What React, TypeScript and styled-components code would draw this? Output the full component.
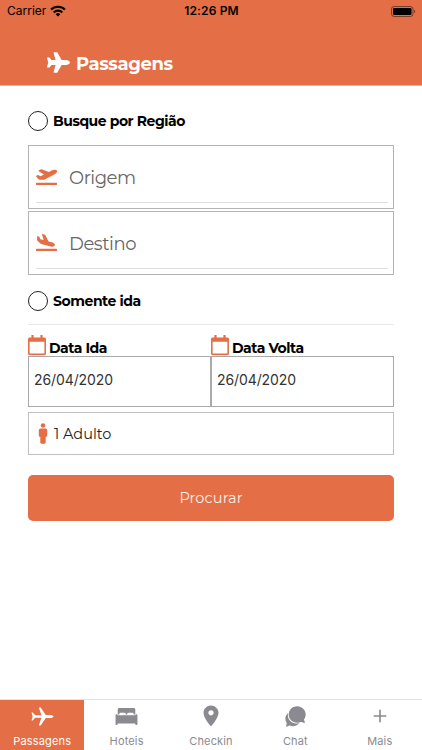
import React from "react";
import styled, { createGlobalStyle } from "styled-components";
import { FaPlane, FaPlaneDeparture, FaPlaneArrival } from "react-icons/fa";
import { IoIosAirplane, IoIosBed, IoMdPin, IoIosChatbubbles, IoIosAdd } from "react-icons/io";

const accent = "#e46e45";
const rule = "#b4b4b6";

const GlobalStyle = createGlobalStyle`
  * { box-sizing: border-box; }
  body { margin: 0; background: #fff; font-family: Montserrat, Inter, "Liberation Sans", sans-serif; color: #000; }
  svg { display: block; flex: none; }
`;

const Screen = styled.div`
  width: 422px;
  height: 750px;
  display: flex;
  flex-direction: column;
  overflow: hidden;
`;

const Header = styled.header`
  height: 86px;
  background: ${accent};
  border-bottom: 1px solid #d9b5a8;
`;

const StatusBar = styled.div`
  height: 22px;
  display: grid;
  grid-template-columns: 1fr auto 1fr;
  align-items: center;
  padding: 0 6px 0 7px;
  font: 400 12px/22px Inter, sans-serif;
`;

const Carrier = styled.span`
  display: flex;
  align-items: center;
  gap: 4px;
`;

const Clock = styled.span`
  font-weight: 600;
  letter-spacing: 0.15px;
`;

const Battery = styled.span`
  display: flex;
  justify-content: flex-end;
`;

const TitleRow = styled.div`
  display: flex;
  align-items: center;
  height: 24px;
  margin: 28px 0 0 47px;
`;

const Title = styled.h1`
  margin: 3px 0 0 6px;
  color: #fff;
  font-size: 18px;
  font-weight: 700;
  line-height: 22px;
  letter-spacing: -0.4px;
`;

const Form = styled.main`
  flex: 1;
  padding: 25px 28px 0;
`;

const RadioRow = styled.label`
  display: flex;
  align-items: center;
  gap: 5px;
  height: 20px;
`;

const Ring = styled.span`
  width: 20px;
  height: 20px;
  border: 1.4px solid #222;
  border-radius: 50%;
`;

const Label = styled.span`
  font-size: 14px;
  font-weight: 700;
  line-height: 18px;
  letter-spacing: -0.45px;
  white-space: nowrap;
`;

const Places = styled.div`
  display: grid;
  gap: 2px;
  margin: 14px 0 16px;
`;

const PlaceBox = styled.div`
  height: 64px;
  border: 1px solid ${rule};
  padding: 0 5px 5px 7px;
`;

const PlaceField = styled.div`
  display: flex;
  align-items: center;
  height: 57px;
  padding-top: 5px;
  border-bottom: 1px solid #dedede;
  color: ${accent};
`;

const PlaceName = styled.span`
  margin: 3px 0 0 12px;
  color: #666;
  font-size: 18px;
  font-weight: 400;
  line-height: 24px;
  letter-spacing: -0.45px;
`;

const Divider = styled.div`
  height: 1px;
  margin: 13px 0 10px;
  background: #e8e8e8;
`;

const Dates = styled.div`
  display: grid;
  grid-template-columns: 1fr 1fr;
`;

const DateHead = styled.div`
  display: flex;
  align-items: flex-end;
  gap: 3px;
  height: 21px;

  ${Label} { margin-bottom: -1px; }
`;

const DateBox = styled.div`
  height: 51px;
  border: 1px solid #a9a9ab;
  padding: 11px 5px;
  color: #333;
  font: 400 14px/24px Inter, sans-serif;
  letter-spacing: -0.1px;
`;

const Travellers = styled.div`
  display: flex;
  align-items: center;
  gap: 6px;
  height: 43px;
  margin-top: 5px;
  padding-left: 9px;
  border: 1px solid #c0c0c2;
  font-size: 14.5px;
  color: #222;
`;

const SearchButton = styled.button`
  display: block;
  width: 100%;
  height: 46px;
  margin-top: 20px;
  padding: 0;
  border: 0;
  border-radius: 5px;
  background: ${accent};
  color: #fdeee8;
  font: 400 14.5px/46px Montserrat, Inter, sans-serif;
  letter-spacing: 0.1px;
`;

const TabBar = styled.nav`
  display: grid;
  grid-template-columns: repeat(5, 1fr);
  height: 51px;
  border-top: 1px solid #e2e2e3;
`;

const Tab = styled.div<{ $active?: boolean }>`
  display: flex;
  flex-direction: column;
  align-items: center;
  background: ${(p) => (p.$active ? accent : "#fff")};
  color: ${(p) => (p.$active ? "#fff" : "#8a8a90")};
`;

const TabIcon = styled.span`
  display: flex;
  align-items: center;
  justify-content: center;
  height: 32px;
`;

const TabLabel = styled.span`
  font: 400 11px/18px Inter, sans-serif;
  letter-spacing: 0.15px;
`;

const WifiIcon = () => (
  <svg width="16" height="12" viewBox="0 0 16 12" fill="none" stroke="#000" strokeWidth="2.1">
    <path d="M1 4.6a10 10 0 0 1 14 0" />
    <path d="M3.7 7.4a6.1 6.1 0 0 1 8.6 0" />
    <path d="M8 11.6 5.6 9.2a3.4 3.4 0 0 1 4.8 0Z" fill="#000" stroke="none" />
  </svg>
);

const BatteryIcon = () => (
  <svg width="25" height="11" viewBox="0 0 25 11">
    <rect x="0.5" y="0.5" width="21.5" height="10" rx="2.6" fill="none" stroke="#000" strokeOpacity="0.45" />
    <rect x="2" y="2" width="18.5" height="7" rx="1.3" />
    <path d="M23.2 3.8c1.4.5 1.4 2.9 0 3.4Z" fillOpacity="0.5" />
  </svg>
);

const CalendarIcon = () => (
  <svg width="18" height="21" viewBox="0 0 18 21" fill={accent}>
    <path
      fillRule="evenodd"
      d="M3.4 0h2.2v2.4h6.8V0h2.2v2.4H16.4Q18 2.4 18 4V18.6Q18 20.2 16.4 20.2H1.6Q0 20.2 0 18.6V4Q0 2.4 1.6 2.4h1.8ZM1.6 6.8V17.9q0 .7.7.7h13.4q.7 0 .7-.7V6.8Z"
    />
  </svg>
);

const PersonIcon = () => (
  <svg width="10" height="21" viewBox="0 0 10 21" fill={accent}>
    <circle cx="5" cy="2.5" r="2.3" />
    <path d="M2.6 5.4h4.8Q9.2 5.4 9.2 7.2v5.6q0 1-1 1H7.7V19.6q0 1.1-1.1 1.1H3.4q-1.1 0-1.1-1.1V13.8H1.8q-1 0-1-1V7.2Q.8 5.4 2.6 5.4Z" />
  </svg>
);

const tabs = [
  { label: "Passagens", icon: <IoIosAirplane size={25} />, active: true },
  { label: "Hoteis", icon: <IoIosBed size={25} /> },
  { label: "Checkin", icon: <IoMdPin size={24} /> },
  { label: "Chat", icon: <IoIosChatbubbles size={25} /> },
  { label: "Mais", icon: <IoIosAdd size={26} /> },
];

export default function App() {
  return (
    <>
      <GlobalStyle />
      <Screen>
        <Header>
          <StatusBar>
            <Carrier>Carrier <WifiIcon /></Carrier>
            <Clock>12:26 PM</Clock>
            <Battery><BatteryIcon /></Battery>
          </StatusBar>
          <TitleRow>
            <FaPlane size={23} color="#fff" />
            <Title>Passagens</Title>
          </TitleRow>
        </Header>
        <Form>
          <RadioRow><Ring /><Label>Busque por Região</Label></RadioRow>
          <Places>
            <PlaceBox>
              <PlaceField><FaPlaneDeparture size={21} /><PlaceName>Origem</PlaceName></PlaceField>
            </PlaceBox>
            <PlaceBox>
              <PlaceField><FaPlaneArrival size={21} /><PlaceName>Destino</PlaceName></PlaceField>
            </PlaceBox>
          </Places>
          <RadioRow><Ring /><Label>Somente ida</Label></RadioRow>
          <Divider />
          <Dates>
            <div>
              <DateHead><CalendarIcon /><Label>Data Ida</Label></DateHead>
              <DateBox>26/04/2020</DateBox>
            </div>
            <div>
              <DateHead><CalendarIcon /><Label>Data Volta</Label></DateHead>
              <DateBox>26/04/2020</DateBox>
            </div>
          </Dates>
          <Travellers><PersonIcon />1 Adulto</Travellers>
          <SearchButton>Procurar</SearchButton>
        </Form>
        <TabBar>
          {tabs.map((t) => (
            <Tab key={t.label} $active={t.active}>
              <TabIcon>{t.icon}</TabIcon>
              <TabLabel>{t.label}</TabLabel>
            </Tab>
          ))}
        </TabBar>
      </Screen>
    </>
  );
}
